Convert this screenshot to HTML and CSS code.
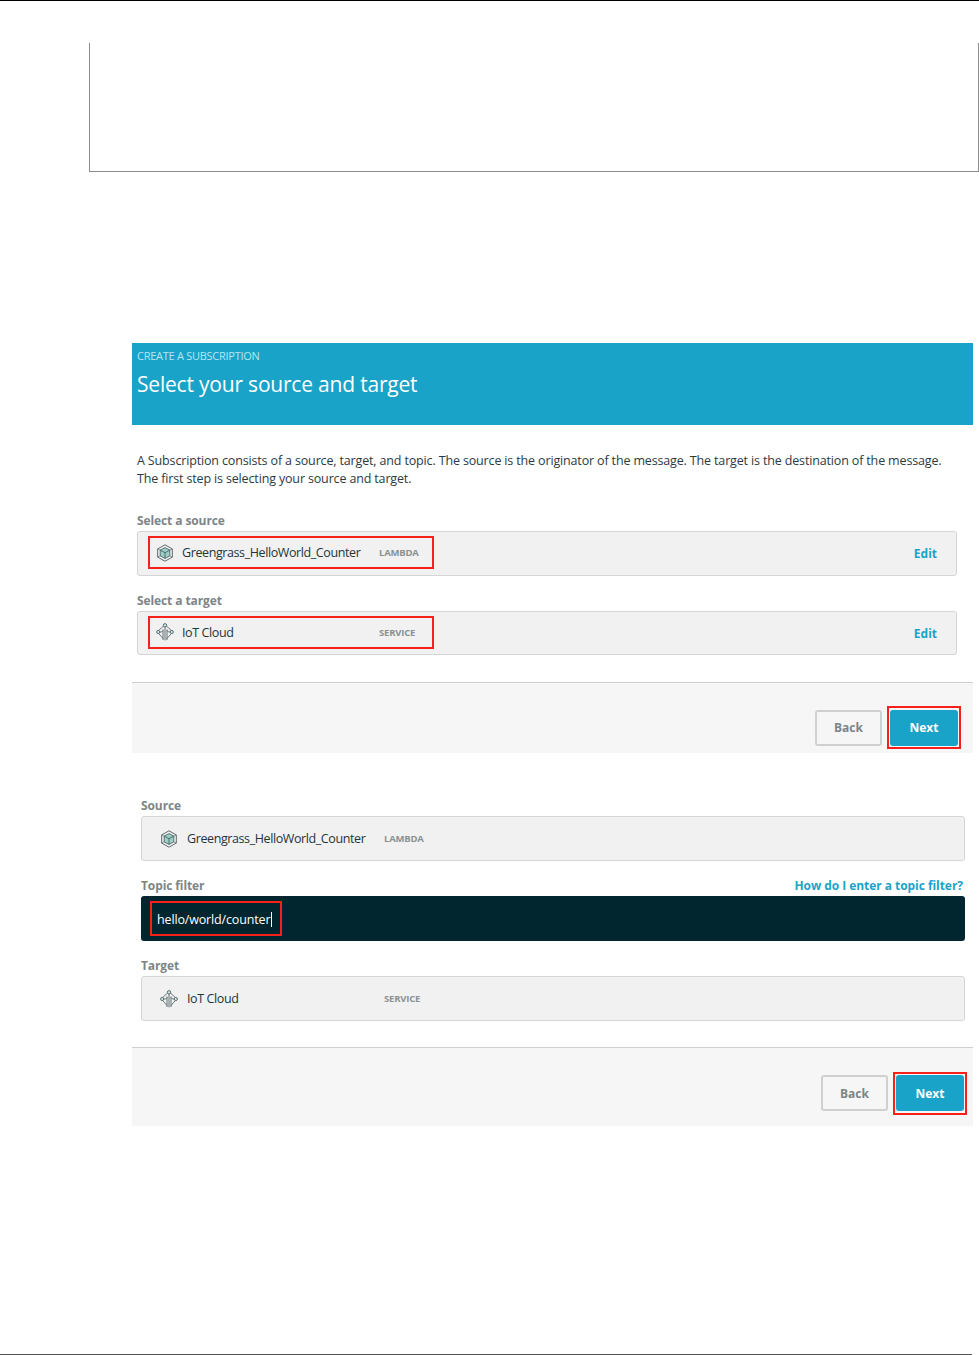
FILE: index.html
```html
<!DOCTYPE html>
<html lang="en">
<head>
    <meta charset="UTF-8">
    <meta name="viewport" content="width=device-width, initial-scale=1.0">
    <title>Create a Subscription</title>
    <link rel="stylesheet" href="styles.css">
</head>
<body>
    <svg class="icon-defs" width="0" height="0" aria-hidden="true">
        <symbol id="icon-lambda" viewBox="0 0 18 18">
            <path d="M9 .8l7.300 4.100v8.200L9 17.200l-7.300-4.100V4.900z" fill="none" stroke="#4d5a5e" stroke-width=".9"/>
            <path d="M9 3.600l4.800 2.500v5.800L9 14.400l-4.800-2.500V6.100z" fill="#9ccdc6" stroke="#31474c" stroke-width=".7"/>
            <path d="M4.200 6.100L9 8.700l4.800-2.600M9 8.700v5.700" fill="none" stroke="#31474c" stroke-width=".7"/>
            <path d="M1.700 4.900l2.500 1.200M16.300 4.900l-2.500 1.200M1.700 13.100l2.500-1.200M16.300 13.100l-2.500-1.200" fill="none" stroke="#4d5a5e" stroke-width=".6"/>
        </symbol>
        <symbol id="icon-iot" viewBox="0 0 18 18">
            <path d="M7.700 2.900L2.800 7.300M10.300 2.900l4.900 4.400M2.800 10.700L7 15.500M15.200 10.700L11 15.500" fill="none" stroke="#4a5c60" stroke-width=".8"/>
            <path d="M9 3.600V17.400M7 6.500v10.500M11 6.500v10.500M3.300 9H5.500L7 7.500M14.700 9H12.500L11 7.500" fill="none" stroke="#3e5257" stroke-width=".8"/>
            <circle cx="9" cy="2.300" r="1.700" fill="#cfe8e4" stroke="#3e5257" stroke-width=".8"/>
            <circle cx="2.200" cy="9" r="1.600" fill="#cfe8e4" stroke="#3e5257" stroke-width=".8"/>
            <circle cx="15.800" cy="9" r="1.600" fill="#cfe8e4" stroke="#3e5257" stroke-width=".8"/>
        </symbol>
    </svg>

    <div class="note-box"></div>

    <section class="panel panel-first">
        <header class="panel-header">
            <div class="eyebrow">CREATE A SUBSCRIPTION</div>
            <h1>Select your source and target</h1>
        </header>
        <p class="intro">A Subscription consists of a source, target, and topic. The source is the originator of the message. The target is the destination of the message.<br>The first step is selecting your source and target.</p>
        <div class="fields fields-first">
            <div class="field-label">Select a source</div>
            <div class="picker">
                <div class="picked marked">
                    <svg class="picker-icon"><use href="#icon-lambda"/></svg>
                    <span class="picked-name">Greengrass_HelloWorld_Counter</span>
                    <span class="picked-tag">LAMBDA</span>
                </div>
                <a class="edit-link" href="#">Edit</a>
            </div>
            <div class="field-label label-target">Select a target</div>
            <div class="picker picker-short">
                <div class="picked marked">
                    <svg class="picker-icon"><use href="#icon-iot"/></svg>
                    <span class="picked-name">IoT Cloud</span>
                    <span class="picked-tag">SERVICE</span>
                </div>
                <a class="edit-link" href="#">Edit</a>
            </div>
        </div>
        <footer class="panel-footer footer-first">
            <button class="btn btn-back" type="button">Back</button>
            <span class="btn-mark"><button class="btn btn-next" type="button">Next</button></span>
        </footer>
    </section>

    <section class="panel panel-second">
        <div class="fields fields-second">
            <div class="field-label">Source</div>
            <div class="picker">
                <div class="picked">
                    <svg class="picker-icon"><use href="#icon-lambda"/></svg>
                    <span class="picked-name">Greengrass_HelloWorld_Counter</span>
                    <span class="picked-tag">LAMBDA</span>
                </div>
            </div>
            <div class="field-label label-row">
                <span>Topic filter</span>
                <a class="help-link" href="#">How do I enter a topic filter?</a>
            </div>
            <div class="topic-input">
                <span class="topic-mark">hello/world/counter<i class="caret"></i></span>
            </div>
            <div class="field-label label-last">Target</div>
            <div class="picker">
                <div class="picked">
                    <svg class="picker-icon"><use href="#icon-iot"/></svg>
                    <span class="picked-name">IoT Cloud</span>
                    <span class="picked-tag">SERVICE</span>
                </div>
            </div>
        </div>
        <footer class="panel-footer footer-second">
            <button class="btn btn-back" type="button">Back</button>
            <span class="btn-mark"><button class="btn btn-next" type="button">Next</button></span>
        </footer>
    </section>

    <div class="bottom-rule"></div>
</body>
</html>
```

FILE: styles.css
```css
* {
    box-sizing: border-box;
}

body {
    display: flex;
    flex-direction: column;
    height: 1355px;
    margin: 0;
    border-top: 1px solid #000;
    background: #fff;
    color: #2b3a3f;
    font-family: "Open Sans", sans-serif;
    overflow: hidden;
}

.icon-defs {
    position: absolute;
}

.note-box {
    height: 129px;
    margin: 42px 0 0 89px;
    border: 1px solid #8c8c8c;
    border-top: none;
}

.panel {
    margin-left: 132px;
    width: 841px;
}

.panel-first {
    margin-top: 171px;
}

.panel-second {
    margin-top: 45px;
}

.panel-header {
    height: 82px;
    padding: 6px 5px 0;
    background: #1aa3c8;
    color: #fff;
}

.eyebrow {
    color: #b5e6f2;
    font-size: 11px;
    line-height: 14px;
    letter-spacing: -0.27px;
}

h1 {
    margin: 7px 0 0;
    font-size: 21px;
    font-weight: 400;
    line-height: 28px;
    letter-spacing: -0.2px;
}

.intro {
    margin: 27px 0 0 5px;
    font-size: 12.500px;
    line-height: 18px;
    letter-spacing: -0.15px;
    color: #2b3a3f;
    white-space: nowrap;
}

.fields-first {
    margin: 25px 16px 0 5px;
}

.fields-second {
    margin: 0 8px 0 9px;
}

.field-label {
    color: #7d8587;
    font-size: 12px;
    font-weight: 700;
    line-height: 16px;
    letter-spacing: -0.1px;
    margin-bottom: 2px;
}

.label-target {
    margin-top: 17px;
}

.label-row {
    display: flex;
    justify-content: space-between;
    margin-top: 17px;
    padding-right: 2px;
}

.label-last {
    margin-top: 17px;
}

.help-link,
.edit-link {
    color: #1aa3c8;
    font-size: 12px;
    font-weight: 700;
    text-decoration: none;
}

.help-link {
    letter-spacing: -0.05px;
}

.picker {
    display: flex;
    align-items: center;
    justify-content: space-between;
    height: 45px;
    padding: 0 19px 0 10px;
    background: #f1f1f1;
    border: 1px solid #d5d5d5;
    border-radius: 3px;
}

.picker-short {
    height: 44px;
}

.picked {
    display: flex;
    align-items: center;
    width: 286px;
    height: 33px;
    padding: 0 8px;
}

.picked.marked {
    padding: 0 6px;
    margin-bottom: 2px;
    border: 2px solid #f5211a;
}

.picker-icon {
    flex: none;
    width: 18px;
    height: 18px;
    margin-right: 9px;
}

.marked .picker-icon {
    margin-right: 8px;
}

.picked-name {
    width: 197px;
    color: #22363b;
    font-size: 12.500px;
    letter-spacing: -0.4px;
    white-space: nowrap;
}

.picked-tag {
    color: #8a9193;
    font-size: 9.500px;
    font-weight: 700;
    letter-spacing: -0.2px;
}

.topic-input {
    display: flex;
    align-items: center;
    height: 45px;
    padding-left: 9px;
    background: #02262f;
    border-radius: 3px;
}

.topic-mark {
    display: flex;
    align-items: center;
    width: 132px;
    height: 35px;
    padding: 1px 0 0 5px;
    border: 2px solid #f5211a;
    color: #fff;
    font-size: 12.500px;
    letter-spacing: -0.15px;
    white-space: nowrap;
}

.caret {
    width: 1px;
    height: 15px;
    margin-left: 1px;
    background: #fff;
}

.panel-footer {
    display: flex;
    align-items: center;
    justify-content: flex-end;
    background: #f6f6f6;
    border-top: 1px solid #cfcfcf;
}

.footer-first {
    height: 71px;
    margin-top: 27px;
    padding: 19px 12px 0 0;
}

.footer-second {
    height: 79px;
    margin-top: 26px;
    padding: 12px 6px 0 0;
}

.btn {
    height: 36px;
    border-radius: 3px;
    font-family: "Open Sans", sans-serif;
    font-size: 12px;
    font-weight: 700;
}

.btn-back {
    width: 67px;
    margin-right: 5px;
    background: #f6f6f6;
    border: 2px solid #d0d0d0;
    color: #7d8587;
}

.btn-mark {
    display: flex;
    align-items: center;
    justify-content: center;
    width: 74px;
    height: 43px;
    border: 2px solid #f5211a;
}

.btn-next {
    width: 68px;
    background: #1aa3c8;
    border: none;
    color: #fff;
}

.bottom-rule {
    width: 972px;
    height: 1px;
    margin-top: auto;
    background: #555;
}
```
